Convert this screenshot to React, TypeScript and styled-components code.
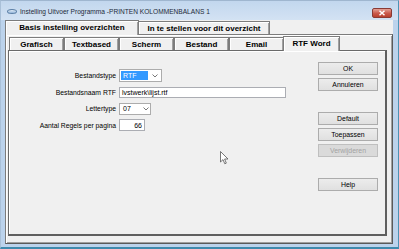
import React from "react";
import styled, { createGlobalStyle } from "styled-components";

const Global = createGlobalStyle`
  html, body { margin: 0; padding: 0; background: #bfd4eb; }
  body { width: 399px; height: 249px; overflow: hidden; font-family: "Liberation Sans", Arial, sans-serif; }
  * { box-sizing: border-box; }
`;

const Window = styled.div`
  position: relative;
  width: 399px;
  height: 249px;
  display: flex;
  flex-direction: column;
  background: #bcd3ec;
  border-right: 1px solid #4d93b5;
  border-bottom: 2px solid #3f8aad;
  border-top: 1px solid #9fb6cf;
  border-left: 1px solid #a9c0d8;
`;

const TitleBar = styled.div`
  height: 19px;
  flex: none;
  display: flex;
  align-items: center;
  padding: 1px 6px 0 6px;
  background: linear-gradient(#c2d7ee, #d3e2f3);
`;

const AppIcon = styled.span`
  width: 10px;
  height: 5px;
  border-radius: 50%;
  border: 1px solid #5b7fa6;
  background: linear-gradient(#e9f2fb, #8fb1d6);
  margin-right: 3px;
  margin-top: 1px;
`;

const Title = styled.span`
  font-size: 6.6px;
  color: #1e2b3a;
  white-space: nowrap;
  flex: 1;
`;

const CloseBtn = styled.div`
  width: 20px;
  height: 10px;
  margin-top: 4px;
  border: 1px solid #8a3a34;
  border-radius: 2px;
  background: linear-gradient(#e4a095, #c9584a 55%, #b8402f);
  display: flex;
  align-items: center;
  justify-content: center;
`;

const Client = styled.div`
  flex: 1;
  margin: 0 5px 3px 4px;
  background: #f0f0f0;
  display: flex;
  flex-direction: column;
`;

const TabStrip = styled.div<{ $inset?: number }>`
  display: flex;
  align-items: flex-end;
  padding-left: ${(p) => p.$inset ?? 0}px;
  position: relative;
  z-index: 1;
`;

const Tab = styled.div<{ $w: number; $active?: boolean; $h: number }>`
  width: ${(p) => p.$w + (p.$active ? 2 : 0)}px;
  height: ${(p) => p.$h + (p.$active ? 2 : 0)}px;
  margin: 0 ${(p) => (p.$active ? -1 : 0)}px ${(p) => (p.$active ? -1 : 0)}px;
  background: #f0f0f0;
  border: 1px solid #7c7c7c;
  border-bottom: none;
  box-shadow: inset 1px 1px 0 #ffffff, inset -1px 0 0 #a0a0a0;
  font-weight: bold;
  font-size: 8px;
  color: #000;
  display: flex;
  align-items: center;
  justify-content: center;
  white-space: nowrap;
  padding-bottom: ${(p) => (p.$active ? 1 : 0)}px;
`;

const OuterPanel = styled.div`
  flex: 1;
  border: 1px solid #7c7c7c;
  border-right-color: #5a5a5a;
  border-bottom-color: #5a5a5a;
  box-shadow: inset 1px 1px 0 #ffffff, inset -1px -1px 0 #a0a0a0;
  padding: 1px 5px 7px 2px;
  display: flex;
  flex-direction: column;
`;

const InnerPanel = styled.div`
  flex: 1;
  border: 1px solid #6a6a6a;
  border-right: 2px solid #5f5f5f;
  border-bottom: 2px solid #5f5f5f;
  box-shadow: inset 1px 1px 0 #ffffff;
  display: flex;
  position: relative;
`;

const Form = styled.div`
  flex: 1;
  display: grid;
  grid-template-columns: 107px auto;
  grid-auto-rows: 13px;
  column-gap: 3px;
  row-gap: 3.5px;
  align-items: center;
  align-content: start;
  padding-top: 18px;
`;

const Label = styled.span`
  font-size: 6.8px;
  color: #000;
  text-align: right;
  white-space: nowrap;
`;

const Field = styled.div<{ $w: number; $h: number; $right?: boolean }>`
  width: ${(p) => p.$w}px;
  height: ${(p) => p.$h}px;
  border: 1px solid #abadb3;
  background: #fff;
  font-size: 7px;
  color: #000;
  display: flex;
  align-items: center;
  justify-content: ${(p) => (p.$right ? "flex-end" : "flex-start")};
  padding: 0 2px;
  white-space: nowrap;
`;

const Combo = styled.div<{ $w: number; $h: number }>`
  width: ${(p) => p.$w}px;
  height: ${(p) => p.$h}px;
  border: 1px solid #acacac;
  background: #fff;
  display: flex;
  align-items: center;
  padding: 0 1px;
  font-size: 7px;
  color: #000;
`;

const ComboText = styled.span<{ $sel?: boolean; $w: number }>`
  width: ${(p) => p.$w}px;
  height: 9px;
  display: flex;
  align-items: center;
  padding-left: 2px;
  background: ${(p) => (p.$sel ? "#3399ff" : "transparent")};
  color: ${(p) => (p.$sel ? "#fff" : "#000")};
`;

const Chevron = styled.svg`
  margin-left: 4px;
  flex: none;
`;

const Buttons = styled.div`
  width: 60px;
  margin: 11px 7px 0 0;
  display: flex;
  flex-direction: column;
  gap: 3px;
`;

const Btn = styled.div<{ $gapTop?: number; $disabled?: boolean }>`
  height: 13px;
  margin-top: ${(p) => p.$gapTop ?? 0}px;
  border: 1px solid ${(p) => (p.$disabled ? "#bfbfbf" : "#acacac")};
  background: ${(p) => (p.$disabled ? "#dadada" : "linear-gradient(#ececec, #e0e0e0)")};
  color: ${(p) => (p.$disabled ? "#a3a3a3" : "#000")};
  font-size: 6.9px;
  display: flex;
  align-items: center;
  justify-content: center;
`;

const Cursor = styled.svg`
  position: absolute;
  left: 211px;
  top: 100px;
`;

const ChevronIcon = () => (
  <Chevron width="6" height="4" viewBox="0 0 6 4">
    <path d="M0.5 0.5 L3 3 L5.5 0.5" fill="none" stroke="#555" strokeWidth="0.8" />
  </Chevron>
);

const outerTabs = [
  { label: "Basis instelling overzichten", active: true },
  { label: "In te stellen voor dit overzicht" },
];
const innerTabs = ["Grafisch", "Textbased", "Scherm", "Bestand", "Email", "RTF Word"];

export default function App() {
  return (
    <>
      <Global />
      <Window>
        <TitleBar>
          <AppIcon />
          <Title>Instelling Uitvoer Programma -PRINTEN KOLOMMENBALANS 1</Title>
          <CloseBtn>
            <svg width="8" height="6" viewBox="0 0 8 6">
              <path d="M1.5 0.8 L6.5 5.2 M6.5 0.8 L1.5 5.2" stroke="#fff" strokeWidth="1.5" />
            </svg>
          </CloseBtn>
        </TitleBar>
        <Client>
          <TabStrip $inset={1}>
            {outerTabs.map((t) => (
              <Tab key={t.label} $w={132} $h={13} $active={t.active}>
                {t.label}
              </Tab>
            ))}
          </TabStrip>
          <OuterPanel>
            <TabStrip $inset={1}>
              {innerTabs.map((t) => (
                <Tab key={t} $w={55} $h={13} $active={t === "RTF Word"}>
                  {t}
                </Tab>
              ))}
            </TabStrip>
            <InnerPanel>
              <Form>
                <Label>Bestandstype</Label>
                <Combo $w={43} $h={13}>
                  <ComboText $sel $w={27}>RTF</ComboText>
                  <ChevronIcon />
                </Combo>
                <Label>Bestandsnaam RTF</Label>
                <Field $w={167} $h={11}>lvstwerk\lijst.rtf</Field>
                <Label>Lettertype</Label>
                <Combo $w={32} $h={12}>
                  <ComboText $w={20}>07</ComboText>
                  <ChevronIcon />
                </Combo>
                <Label>Aantal Regels per pagina</Label>
                <Field $w={26} $h={12} $right>66</Field>
              </Form>
              <Buttons>
                <Btn>OK</Btn>
                <Btn>Annuleren</Btn>
                <Btn $gapTop={18}>Default</Btn>
                <Btn>Toepassen</Btn>
                <Btn $disabled>Verwijderen</Btn>
                <Btn $gapTop={18}>Help</Btn>
              </Buttons>
              <Cursor width="10" height="14" viewBox="0 0 10 14">
                <path d="M0.5 0.5 L0.5 11 L3 8.6 L4.8 12.8 L6.3 12.1 L4.6 8 L8 8 Z" fill="#fff" stroke="#555" strokeWidth="0.8" />
              </Cursor>
            </InnerPanel>
          </OuterPanel>
        </Client>
      </Window>
    </>
  );
}
